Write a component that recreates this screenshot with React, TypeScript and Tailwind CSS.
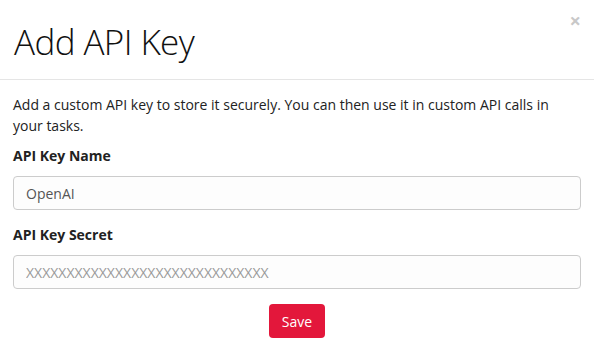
export default function App() {
  return (
    <div className="min-h-screen w-full bg-white text-[#222] font-['Open_Sans',sans-serif]">
      {/* Header */}
      <header className="relative h-[80px] border-b border-[#e5e5e5] px-[13px] flex items-center">
        <h1 className="text-[35px] font-light leading-none tracking-[-0.6px] mt-[4px] ml-[1px] text-[#111]">
          Add API Key
        </h1>
        <button className="absolute right-[13px] top-[11px] text-[20px] leading-none text-[#c8c8c8] font-bold">
          ×
        </button>
      </header>

      {/* Body */}
      <div className="px-[13px] pt-[14px]">
        <p className="text-[14px] leading-[21px] text-[#222]">
          Add a custom API key to store it securely. You can then use it in custom API calls in your tasks.
        </p>

        <label className="block mt-[9px] text-[14px] font-bold leading-[22px]">API Key Name</label>
        <input
          defaultValue="OpenAI"
          className="mt-[9px] w-full h-[34px] rounded-[4px] border border-[#ccc] bg-[#fdfdfd] px-[12px] text-[14px] text-[#555] outline-none"
        />

        <label className="block mt-[14px] text-[14px] font-bold leading-[22px]">API Key Secret</label>
        <input
          placeholder="XXXXXXXXXXXXXXXXXXXXXXXXXXXXXX"
          className="mt-[9px] w-full h-[34px] rounded-[4px] border border-[#ccc] bg-[#fdfdfd] px-[12px] text-[14px] text-[#555] placeholder:text-[#999] outline-none"
        />

        <div className="flex justify-center mt-[15px]">
          <button className="h-[34px] px-[13px] rounded-[4px] bg-[#e3173b] text-white text-[14px]">
            Save
          </button>
        </div>
      </div>
    </div>
  );
}
